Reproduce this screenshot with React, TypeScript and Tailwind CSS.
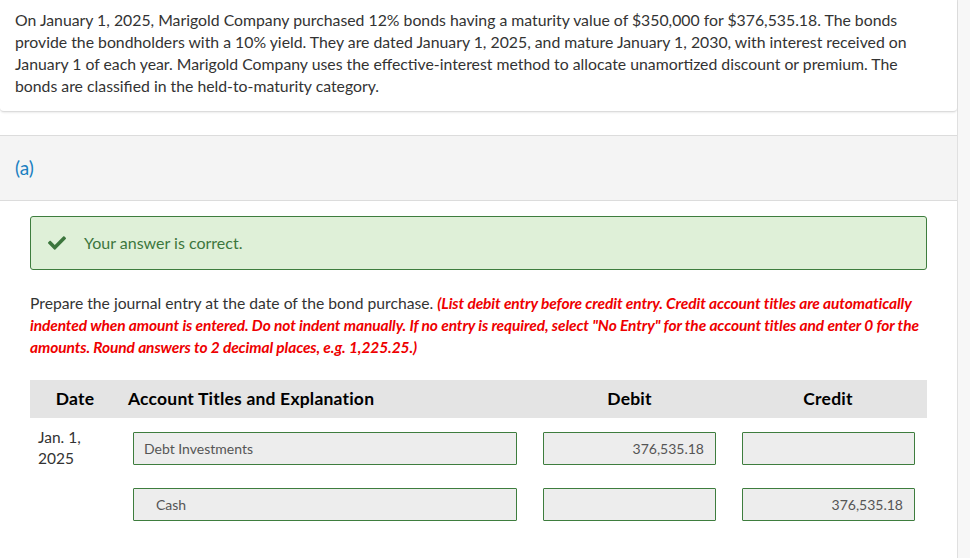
import React from 'react';
import { FaCheck } from 'react-icons/fa';

const Field = ({ value, align = 'left', indent = false, width }: { value: string; align?: 'left' | 'right'; indent?: boolean; width: string }) => (
  <div
    className={`${width} h-[33px] flex items-center bg-[#ededed] border-[1.5px] border-[#3e7d3e] rounded-[1px] text-[14px] text-[#555] ${
      align === 'right' ? 'justify-end pr-[11px]' : indent ? 'pl-[22px]' : 'pl-[10px]'
    }`}
  >
    {value}
  </div>
);

export default function App() {
  return (
    <div className="flex min-h-[558px] bg-white font-['Lato','Noto_Sans',sans-serif] text-[#333]">
      <div className="w-[958px] shrink-0 border-r border-[#e0e0e0]">
        {/* Question */}
        <div className="bg-white rounded-b-[4px] border-b border-[#dcdcdc] shadow-[0_1px_2px_rgba(0,0,0,0.08)] px-[15px] pt-[9px] pb-[14px] text-[15.8px] leading-[22px]">
          On January 1, 2025, Marigold Company purchased 12% bonds having a maturity value of $350,000 for $376,535.18. The bonds
          provide the bondholders with a 10% yield. They are dated January 1, 2025, and mature January 1, 2030, with interest received on
          January 1 of each year. Marigold Company uses the effective-interest method to allocate unamortized discount or premium. The
          bonds are classified in the held-to-maturity category.
        </div>

        {/* Part header */}
        <div className="mt-[23px] h-[66px] bg-[#f4f4f4] border-y border-[#dcdcdc] flex items-center px-[15px]">
          <span className="text-[19px] text-[#1a7fc1]">(a)</span>
        </div>

        <div className="px-[30px]">
          {/* Correct banner */}
          <div className="mt-[15px] h-[54px] bg-[#dff0d8] border border-[#3e7d3e] rounded-[3px] flex items-center pl-[17px]">
            <FaCheck className="w-[18px] h-[18px] text-[#3c763d]" />
            <span className="ml-[18px] text-[16px] text-[#3c763d]">Your answer is correct.</span>
          </div>

          {/* Instructions */}
          <p className="mt-[22px] text-[15.7px] leading-[22px] text-[#333]">
            Prepare the journal entry at the date of the bond purchase.{' '}
            <span className="font-bold italic text-[#ee0000] text-[15.5px] tracking-[-0.1px]">
              (List debit entry before credit entry. Credit account titles are automatically indented when amount is entered. Do not
              indent manually. If no entry is required, select "No Entry" for the account titles and enter 0 for the amounts. Round
              answers to 2 decimal places, e.g. 1,225.25.)
            </span>
          </p>

          {/* Journal table */}
          <div className="mt-[22px]">
            <div className="h-[38px] bg-[#e4e4e4] flex items-center text-[17.5px] tracking-[0.2px] font-bold text-black">
              <div className="w-[90px] text-center">Date</div>
              <div className="w-[407px] pl-[8px]">Account Titles and Explanation</div>
              <div className="w-[205px] text-center">Debit</div>
              <div className="w-[192px] text-center">Credit</div>
            </div>

            <div className="flex mt-[14px]">
              <div className="w-[103px] pl-[8px] -mt-[5px] text-[15.5px] leading-[21px]">
                Jan. 1,
                <br />
                2025
              </div>
              <div className="flex flex-col gap-[23px]">
                <div className="flex">
                  <Field value="Debt Investments" width="w-[384px]" />
                  <div className="w-[26px]" />
                  <Field value="376,535.18" align="right" width="w-[173px]" />
                  <div className="w-[26px]" />
                  <Field value="" width="w-[173px]" />
                </div>
                <div className="flex">
                  <Field value="Cash" indent width="w-[384px]" />
                  <div className="w-[26px]" />
                  <Field value="" width="w-[173px]" />
                  <div className="w-[26px]" />
                  <Field value="376,535.18" align="right" width="w-[173px]" />
                </div>
              </div>
            </div>
          </div>
        </div>
      </div>
      <div className="flex-1 bg-[#f7f7f7]" />
    </div>
  );
}
